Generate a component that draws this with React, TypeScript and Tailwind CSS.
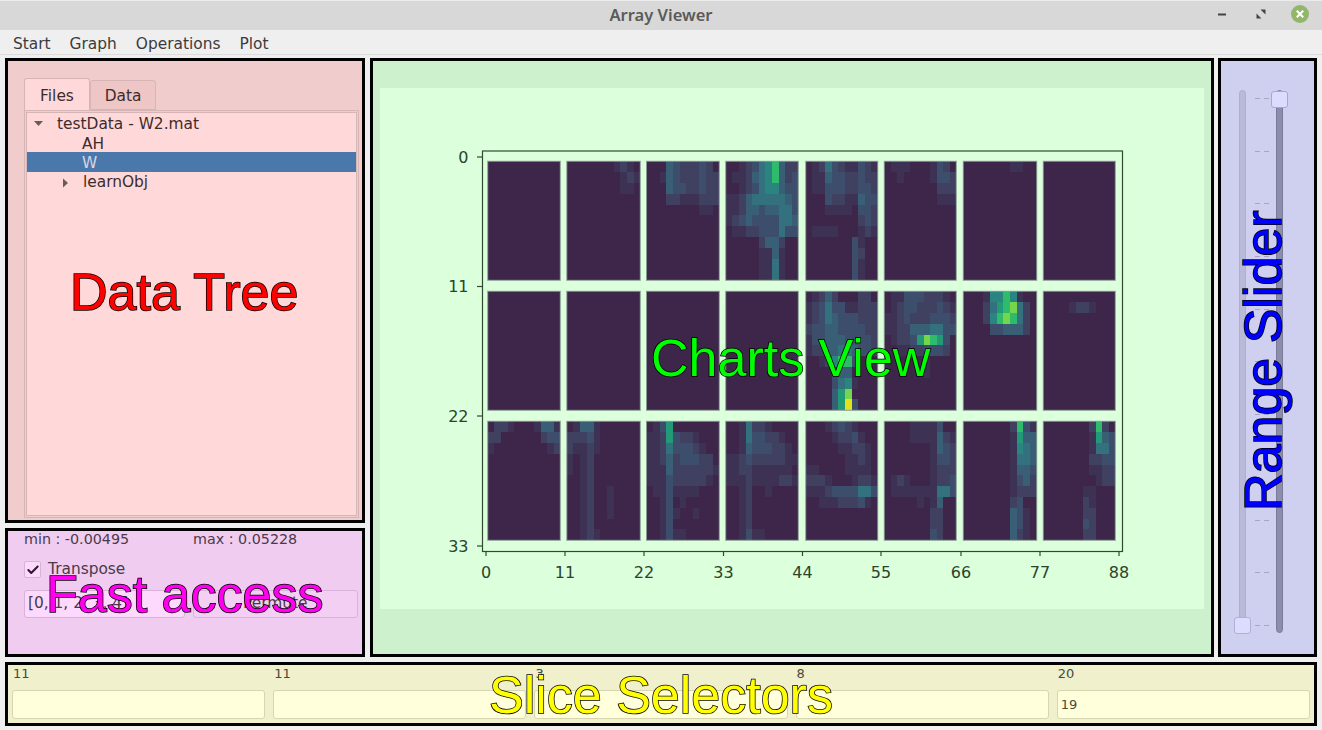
import { Check } from "lucide-react";

const ui = "font-['DejaVu_Sans',sans-serif]";

// colour per level, viridis seen through the pale green tint
const levels: Record<string, string> = {
  "0": "#3d2849",
  "1": "#3e3352",
  "2": "#3f4060",
  "3": "#3d4e6c",
  "4": "#395f76",
  "5": "#33717d",
  "6": "#2b8580",
  "7": "#229a78",
  "8": "#2fbc6c",
  "9": "#74d64c",
  a: "#e3e01f",
};

// rows of 11 cells, rows left out are empty
const panels: string[][] = [
  [],
  ["00000001210", "00000000121", "00000000110"],
  ["00043222320", "00143222322", "00043322322", "00022111222", "00000000110"],
  [
    "00123568422",
    "01124568423",
    "00123566433",
    "11245555543",
    "11244344553",
    "12343333554",
    "01122333533",
    "00000244200",
    "00000114100",
    "00000115100",
    "00000115100",
  ],
  [
    "01253211321",
    "01143322322",
    "01133322332",
    "00032211433",
    "00011110332",
    "00000000232",
    "01111000121",
    "00000003100",
    "00000003200",
    "00000003100",
    "00000003100",
  ],
  ["01110001320", "00100001332", "00000000222", "00000000111"],
  ["00000001100"],
  [],
  [],
  [],
  [],
  [],
  [
    "01242000220",
    "12353311222",
    "12354333222",
    "23344333322",
    "13344433332",
    "12244554332",
    "00126883000",
    "00003440000",
    "00003561000",
    "00004790000",
    "000047a3000",
  ],
  [
    "01133322210",
    "01233222321",
    "11232223332",
    "11224445533",
    "01223798730",
    "00112233320",
    "00000010000",
    "00000010000",
  ],
  ["00016686100", "00025789520", "00026898520", "00003344420"],
  ["00000000000", "00001221000"],
  ["02210001441", "22000000233", "10000000012"],
  [
    "01441000000",
    "22231000000",
    "21121000000",
    "10120000000",
    "10120000000",
    "00120000000",
    "00120010000",
    "00120010000",
    "00120010000",
    "00120000000",
    "00121000000",
  ],
  [
    "01370000000",
    "11273221000",
    "11253332100",
    "11242333220",
    "11142222221",
    "11132222210",
    "01131111000",
    "00130100000",
    "00131001000",
    "00130000000",
    "00131100000",
  ],
  [
    "00152210000",
    "00153322100",
    "00143332210",
    "11232222211",
    "11221111110",
    "11121111221",
    "00120010000",
    "00120000000",
    "00120000000",
    "00120000000",
    "00131100000",
  ],
  [
    "00012321000",
    "00001223100",
    "00000112210",
    "00000011210",
    "11000011110",
    "22210001221",
    "11123333553",
    "00111222310",
  ],
  [
    "00001111300",
    "00001111421",
    "00000001432",
    "00000001332",
    "00000001222",
    "01210001223",
    "01111111553",
    "00000101400",
    "00000002200",
    "00000002200",
    "00000003200",
  ],
  [
    "00000002831",
    "00000001744",
    "00000001654",
    "00000001554",
    "00000001443",
    "00000001342",
    "00000001222",
    "00000002300",
    "00000004310",
    "00000004310",
    "00000004210",
  ],
  [
    "00000002820",
    "00000001743",
    "00000001553",
    "00000002233",
    "00000001122",
    "00000000122",
    "00000011000",
    "00000021000",
    "00000022000",
    "00000032000",
    "00000022000",
  ],
];

const panelX = [487.7, 566.8, 646.5, 725.7, 805.7, 884.3, 963.3, 1043.3];
const panelRight = [560.3, 640.3, 719.3, 798.3, 877.7, 956.3, 1036.7, 1115.3];
const panelY = [161.3, 291.3, 421.3];
const panelH = 119;

const xTicks = [
  { label: "0", x: 486 },
  { label: "11", x: 565 },
  { label: "22", x: 644 },
  { label: "33", x: 723.5 },
  { label: "44", x: 802.5 },
  { label: "55", x: 881 },
  { label: "66", x: 961 },
  { label: "77", x: 1040 },
  { label: "88", x: 1119 },
];

const yTicks = [
  { label: "0", y: 157 },
  { label: "11", y: 286.5 },
  { label: "22", y: 416 },
  { label: "33", y: 546 },
];

function HeatPanel({ index }: { index: number }) {
  const col = index % 8;
  const row = Math.floor(index / 8);
  const x = panelX[col];
  const y = panelY[row];
  const w = panelRight[col] - x;
  const cw = w / 11;
  const ch = panelH / 11;
  const cells = [];
  for (let r = 0; r < 11; r++) {
    const line = panels[index][r] ?? "00000000000";
    for (let c = 0; c < 11; c++) {
      cells.push(
        <rect
          key={`${r}-${c}`}
          x={x + c * cw}
          y={y + r * ch}
          width={cw}
          height={ch}
          fill={levels[line[c]]}
          shapeRendering="crispEdges"
        />,
      );
    }
  }
  return (
    <g>
      <g filter="url(#soft)">{cells}</g>
      <rect x={x} y={y} width={w} height={panelH} fill="none" stroke="#8b9a96" strokeWidth="1" />
    </g>
  );
}

function Chart() {
  return (
    <svg viewBox="380 88 824 521" className="block h-full w-full">
      <defs>
        <filter id="soft">
          <feGaussianBlur stdDeviation="0.5" />
        </filter>
      </defs>
      {panels.map((_, i) => (
        <HeatPanel key={i} index={i} />
      ))}
      <rect x="482.5" y="151" width="640" height="400.5" fill="none" stroke="#2f4a2f" strokeWidth="1.2" />
      {xTicks.map((t) => (
        <g key={t.label}>
          <line x1={t.x} x2={t.x} y1="551.5" y2="556" stroke="#2f4a2f" strokeWidth="1.2" />
          <text x={t.x} y="577.5" textAnchor="middle" fontSize="16" fill="#2b442b" fontFamily="DejaVu Sans">
            {t.label}
          </text>
        </g>
      ))}
      {yTicks.map((t) => (
        <g key={t.label}>
          <line x1="477" x2="482.5" y1={t.y} y2={t.y} stroke="#2f4a2f" strokeWidth="1.2" />
          <text x="468.5" y={t.y + 5.5} textAnchor="end" fontSize="16" fill="#2b442b" fontFamily="DejaVu Sans">
            {t.label}
          </text>
        </g>
      ))}
    </svg>
  );
}

function TitleBar() {
  return (
    <div className="relative flex h-[30px] shrink-0 items-center justify-center border-t border-[#ececec] bg-[#d8d8d8]">
      <span className="font-['Noto_Sans',sans-serif] text-[16.5px] font-semibold text-[#5a5a5a]">Array Viewer</span>
      <div className="absolute right-[13px] top-[4px] flex items-center gap-[21px]">
        <svg width="18" height="18" viewBox="0 0 18 18">
          <rect x="5" y="8.5" width="8" height="2" fill="#444" />
        </svg>
        <svg width="18" height="18" viewBox="0 0 18 18">
          <path d="M4.5 13.5 V8.5 L9.5 13.5 Z M8.5 4.5 H13.5 V9.5 Z" fill="#444" />
        </svg>
        <svg width="18" height="18" viewBox="0 0 18 18">
          <circle cx="9" cy="9" r="9" fill="#93b76a" />
          <path d="M5.8 5.8 L12.2 12.2 M12.2 5.8 L5.8 12.2" stroke="#fff" strokeWidth="2" />
        </svg>
      </div>
    </div>
  );
}

function MenuBar() {
  return (
    <div className="flex h-[25px] shrink-0 items-center gap-[19px] border-b border-[#dcdcdc] pl-[13px] pt-[5px] text-[15.4px] text-[#3b3b3b]">
      <span>Start</span>
      <span>Graph</span>
      <span>Operations</span>
      <span>Plot</span>
    </div>
  );
}

function OverlayText({ className, children }: { className: string; children: string }) {
  return (
    <span
      className={`absolute whitespace-nowrap font-['Liberation_Sans',sans-serif] text-[52px] leading-none [-webkit-text-stroke:1.5px_#000] [paint-order:stroke_fill] ${className}`}
    >
      {children}
    </span>
  );
}

function DataTree() {
  return (
    <div className="relative flex h-[465px] flex-col border-[3px] border-black bg-[#f0cccc] pl-[16px] pr-[3px] pt-[17px] pb-[2px]">
      <div className="flex h-[32px] items-end text-[15.4px] text-[#3c2c2c]">
        <div className="flex h-[32px] w-[66px] items-center justify-center rounded-t-[3px] border border-b-0 border-[#d5b5b5] bg-[#ffd9d9] pt-[4px]">
          Files
        </div>
        <div className="flex h-[30px] w-[66px] items-center justify-center rounded-t-[3px] border border-[#d5b5b5] bg-[#eec6c6] pt-[4px]">
          Data
        </div>
      </div>
      <div className="flex-1 border border-[#d5b5b5] bg-[#f0cccc] p-[1px]">
        <div className="h-full border border-[#d5b5b5] bg-[#ffd9d9] text-[15.4px] leading-[19.5px] text-[#3c2c2c]">
          <div className="flex h-[19.5px] items-center pl-[6px] pt-[3px]">
            <svg width="12" height="8" viewBox="0 0 12 8">
              <path d="M1 1 H10 L5.5 6 Z" fill="#6b5a5a" />
            </svg>
            <span className="ml-[12px]">testData - W2.mat</span>
          </div>
          <div className="h-[19.5px] pl-[55px] pt-[2px]">AH</div>
          <div className="h-[19.5px] bg-[#4b78aa] pl-[55px] pt-[2px] text-[#d8d4e8]">W</div>
          <div className="flex h-[19.5px] items-center pl-[35px] pt-[3px]">
            <svg width="7" height="10" viewBox="0 0 7 10">
              <path d="M1 0.5 L6 5 L1 9.5 Z" fill="#6b5a5a" />
            </svg>
            <span className="ml-[14px]">learnObj</span>
          </div>
        </div>
      </div>
      <OverlayText className="left-[62px] top-[205px] text-[#ff0000]">Data Tree</OverlayText>
    </div>
  );
}

function FastAccess() {
  return (
    <div className="relative flex h-[129px] flex-col border-[3px] border-black bg-[#f0cdf0] pl-[16px] pr-[4px] text-[15.4px] text-[#4a3a4a]">
      <div className="flex h-[17px] items-center text-[14.3px]">
        <span className="w-[169px]">min : -0.00495</span>
        <span>max : 0.05228</span>
      </div>
      <div className="mt-[13px] flex h-[17px] items-center">
        <span className="flex h-[17px] w-[17px] items-center justify-center rounded-[2px] border border-[#d8b2d8] bg-[#fdd9fd]">
          <Check size={14} strokeWidth={3.5} className="text-[#2a1a2a]" />
        </span>
        <span className="ml-[7px]">Transpose</span>
      </div>
      <div className="mt-[12px] flex gap-[8px]">
        <div className="flex h-[28px] w-[161px] items-center rounded-[3px] border border-[#d8b2d8] bg-[#fdd9fd] pl-[3px]">
          [0, 1, 2, 3, 4]
        </div>
        <div className="flex h-[28px] w-[166px] items-center justify-center rounded-[3px] border border-[#d8b2d8] bg-[#f3d0f3]">
          Permute
        </div>
      </div>
      <OverlayText className="left-[38px] top-[37px] text-[#ff00ee]">Fast access</OverlayText>
    </div>
  );
}

function ChartsView() {
  return (
    <div className="relative flex w-[844px] flex-col border-[3px] border-black bg-[#cdf0cd]">
      <div className="h-[27px] shrink-0" />
      <div className="mx-[7px] h-[521px] bg-[#dcffdc]">
        <Chart />
      </div>
      <OverlayText className="left-[278px] top-[271px] text-[#00ff00]">Charts View</OverlayText>
    </div>
  );
}

function RangeSlider() {
  const ticks = Array.from({ length: 11 }, (_, i) => i);
  return (
    <div className="relative w-[99px] border-[3px] border-black bg-[#cfcff0]">
      <div className="relative ml-[18px] mt-[29px] flex h-[543px]">
        <div className="relative h-[535px] w-[7px] rounded-full border border-[#aeaed0] bg-[#b9b9d8]">
          <div className="absolute -left-[6px] top-[526px] h-[17px] w-[17px] rounded-[3px] border border-[#b0b0d4] bg-[#dcdcff]" />
        </div>
        <div className="ml-[9px] flex h-[536px] w-[14px] flex-col justify-between pt-[8px]">
          {ticks.map((t) => (
            <div key={t} className="flex h-[1px] justify-between">
              <span className="h-[1px] w-[5px] bg-[#a6a6c4]" />
              <span className="h-[1px] w-[5px] bg-[#a6a6c4]" />
            </div>
          ))}
        </div>
        <div className="relative ml-[7px] h-full w-[7px] rounded-full border border-[#7a7a9a] bg-[#8c8cac]">
          <div className="absolute -left-[6px] top-0 h-[17px] w-[17px] rounded-[3px] border border-[#a8a8cc] bg-[#dcdcff]" />
        </div>
      </div>
      <OverlayText className="left-[-108px] top-[274px] w-[300px] -rotate-90 text-center text-[#0000ff]">
        Range Slider
      </OverlayText>
    </div>
  );
}

function SliceSelectors() {
  const slices = [
    { label: "11", value: "" },
    { label: "11", value: "" },
    { label: "3", value: "" },
    { label: "8", value: "" },
    { label: "20", value: "19" },
  ];
  return (
    <div className="relative mt-[5px] flex h-[64px] w-[1312px] gap-[8px] border-[3px] border-black bg-[#f0f0cd] pl-[4px] pr-[4px] text-[13px] text-[#4a4a3a]">
      {slices.map((s, i) => (
        <div key={i} className="flex flex-1 flex-col">
          <span className="h-[25px] pl-[1px] pt-[1px] leading-[16px]">{s.label}</span>
          <div className="flex h-[29px] items-center rounded-[3px] border border-[#d6d6b0] bg-[#ffffdc] pl-[3px]">
            {s.value}
          </div>
        </div>
      ))}
      <OverlayText className="left-[481px] top-[4px] text-[#ffff00]">Slice Selectors</OverlayText>
    </div>
  );
}

export default function App() {
  return (
    <div className={`${ui} flex h-[730px] w-[1322px] flex-col overflow-hidden bg-[#efefef]`}>
      <TitleBar />
      <MenuBar />
      <div className="flex flex-col pl-[5px] pt-[3px]">
        <div className="flex h-[599px] gap-[5px]">
          <div className="flex w-[360px] flex-col gap-[5px]">
            <DataTree />
            <FastAccess />
          </div>
          <div className="flex gap-[4px]">
            <ChartsView />
            <RangeSlider />
          </div>
        </div>
        <SliceSelectors />
      </div>
    </div>
  );
}
